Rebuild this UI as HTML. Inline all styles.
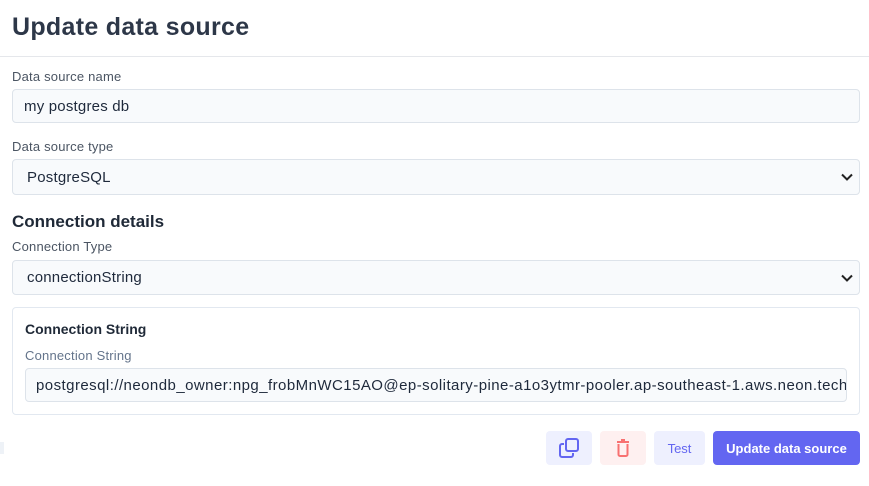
<!DOCTYPE html><html><head><style>
*{box-sizing:border-box;margin:0;padding:0}
body{width:869px;height:486px;background:#fff;font-family:"Liberation Sans",sans-serif;color:#334155;position:relative;overflow:hidden}
.a{position:absolute}
.lbl{font-size:13px;color:#4b5563;letter-spacing:0.2px}
.in{position:absolute;background:#f8fafc;border:1px solid #dde3ea;border-radius:4px;font-size:15px;color:#1e293b;padding-left:14px;display:flex;align-items:center;white-space:nowrap;overflow:hidden;letter-spacing:0.2px}
.chev{position:absolute;right:6px;top:50%;margin-top:-4px}
.btn{position:absolute;top:431px;height:34px;border-radius:4px;display:flex;align-items:center;justify-content:center;font-size:13px}
</style></head><body>
<div class="a" style="left:12px;top:13px;font-size:25px;font-weight:bold;color:#2d3748;letter-spacing:0.3px">Update data source</div>
<div class="a" style="left:0;top:56px;width:869px;height:1px;background:#e5e7eb"></div>
<div class="a lbl" style="left:12px;top:69px">Data source name</div>
<div class="in" style="left:12px;top:89px;width:848px;height:34px;padding-left:11px">my postgres db</div>
<div class="a lbl" style="left:12px;top:139px">Data source type</div>
<div class="in" style="left:12px;top:159px;width:848px;height:36px">PostgreSQL<svg class="chev" width="12" height="8" viewBox="0 0 12 8"><path d="M1 1.5l5 5 5-5" stroke="#222" stroke-width="2" fill="none"/></svg></div>
<div class="a" style="left:12px;top:212px;font-size:17px;font-weight:bold;color:#1f2937">Connection details</div>
<div class="a lbl" style="left:12px;top:239px">Connection Type</div>
<div class="in" style="left:12px;top:260px;width:848px;height:35px">connectionString<svg class="chev" width="12" height="8" viewBox="0 0 12 8"><path d="M1 1.5l5 5 5-5" stroke="#222" stroke-width="2" fill="none"/></svg></div>
<div class="a" style="left:12px;top:307px;width:848px;height:108px;border:1px solid #e2e8f0;border-radius:4px"></div>
<div class="a" style="left:25px;top:321px;font-size:14px;font-weight:bold;color:#1f2937">Connection String</div>
<div class="a lbl" style="left:25px;top:348px;color:#64748b">Connection String</div>
<div class="in" style="left:25px;top:368px;width:822px;height:34px;padding-left:10px;letter-spacing:0.45px">postgresql://neondb_owner:npg_frobMnWC15AO@ep-solitary-pine-a1o3ytmr-pooler.ap-southeast-1.aws.neon.tech</div>
<div class="a" style="left:0;top:442px;width:4px;height:12px;background:#eef2f7"></div>
<div class="btn" style="left:546px;width:46px;background:#eef0fe"><svg width="22" height="22" viewBox="0 0 22 22" fill="none" stroke="#6366f1" stroke-width="2"><rect x="8" y="2" width="12" height="12" rx="2"/><path d="M6 7H4a2 2 0 0 0-2 2v9a2 2 0 0 0 2 2h9a2 2 0 0 0 2-2v-2"/></svg></div>
<div class="btn" style="left:600px;width:46px;background:#fef0f0"><svg width="14" height="18" viewBox="0 0 14 18" fill="none" stroke="#f87171" stroke-width="2"><path d="M1 3h12M5 1h4M2.5 5v10.5a1.5 1.5 0 0 0 1.5 1.5h6a1.5 1.5 0 0 0 1.5-1.5V5"/></svg></div>
<div class="btn" style="left:654px;width:51px;background:#eef0fe;color:#6366f1">Test</div>
<div class="btn" style="left:713px;width:147px;background:#6366f1;color:#fff;font-weight:bold">Update data source</div>
</body></html>
